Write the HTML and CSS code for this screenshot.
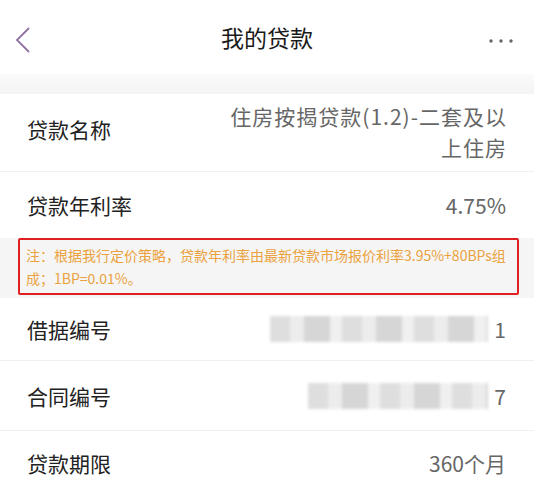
FILE: index.html
```html
<!DOCTYPE html>
<html>
<head>
<meta charset="utf-8">
<title>我的贷款</title>
<link rel="stylesheet" href="styles.css">
</head>
<body>
<div class="header">
  <svg class="back" width="16" height="26" viewBox="0 0 16 26"><path d="M14 1 L2 13 L14 25" fill="none" stroke="#8f73a0" stroke-width="1.8"/></svg>
  <div class="title">我的贷款</div>
  <svg class="more" width="24" height="6" viewBox="0 0 24 6"><circle cx="2" cy="3" r="1.7" fill="#666"/><circle cx="12" cy="3" r="1.7" fill="#666"/><circle cx="22" cy="3" r="1.7" fill="#666"/></svg>
</div>
<div class="band"></div>
<div class="row row-tall">
  <div class="label label-up">贷款名称</div>
  <div class="value value-wrap">住房按揭贷款(1.2)-二套及以上住房</div>
</div>
<div class="row row-rate">
  <div class="label">贷款年利率</div>
  <div class="value">4.75%</div>
</div>
<div class="note-area">
  <div class="note">注：根据我行定价策略，贷款年利率由最新贷款市场报价利率3.95%+80BPs组成；1BP=0.01%。</div>
</div>
<div class="row row-bill">
  <div class="label">借据编号</div>
  <div class="value"><span class="blur blur-a"></span>1</div>
</div>
<div class="row row-contract">
  <div class="label">合同编号</div>
  <div class="value"><span class="blur blur-b"></span>7</div>
</div>
<div class="row row-last">
  <div class="label">贷款期限</div>
  <div class="value">360个月</div>
</div>
</body>
</html>
```
FILE: styles.css
```css
body {
  margin: 0;
  background: #ffffff;
  font-family: "Noto Sans CJK SC", "Noto Sans", sans-serif;
  overflow: hidden;
}

.header {
  height: 74px;
  display: flex;
  align-items: center;
  padding: 0 21px 0 15px;
  position: relative;
}

.back {
  margin-top: 5px;
}

.title {
  position: absolute;
  left: 0;
  right: 0;
  text-align: center;
  font-size: 23px;
  color: #1a1a1a;
  top: 20px;
  pointer-events: none;
}

.more {
  margin-left: auto;
  margin-top: 7px;
}

.band {
  height: 20px;
  background: linear-gradient(#fbfbfb, #f4f4f4);
}

.row {
  display: flex;
  align-items: center;
  justify-content: space-between;
  padding: 0 28px 0 27px;
  border-bottom: 1px solid #f0f0f0;
}

.row-tall {
  height: 77px;
}

.row-rate {
  height: 66px;
  border-bottom: none;
}

.row-bill {
  height: 62px;
}

.row-contract {
  height: 69px;
}

.row-last {
  height: 64px;
  border-bottom: none;
}

.label {
  font-size: 21px;
  color: #222;
  white-space: nowrap;
}

.label-up {
  margin-bottom: 8px;
}

.value {
  font-size: 21px;
  color: #666;
  text-align: right;
  display: flex;
  align-items: center;
}

.value-wrap {
  display: block;
  max-width: 282px;
  letter-spacing: 1px;
  line-height: 31px;
  margin-top: -2px;
  margin-right: -1px;
}

.note-area {
  background: #f5f5f5;
  padding: 0 15px 3px 18px;
}

.note {
  border: 2px solid #e02020;
  border-radius: 2px;
  padding: 4px 6px 3px 6px;
  font-size: 14px;
  line-height: 23px;
  color: #eba23e;
}

.blur {
  display: inline-block;
  height: 26px;
  margin-right: 6px;
  background: repeating-linear-gradient(90deg, #dedede 0 20px, #ececec 20px 34px, #d6d6d6 34px 60px, #f0f0f0 60px 72px);
  filter: blur(1.5px);
}

.blur-a {
  width: 218px;
}

.blur-b {
  width: 180px;
}
```
